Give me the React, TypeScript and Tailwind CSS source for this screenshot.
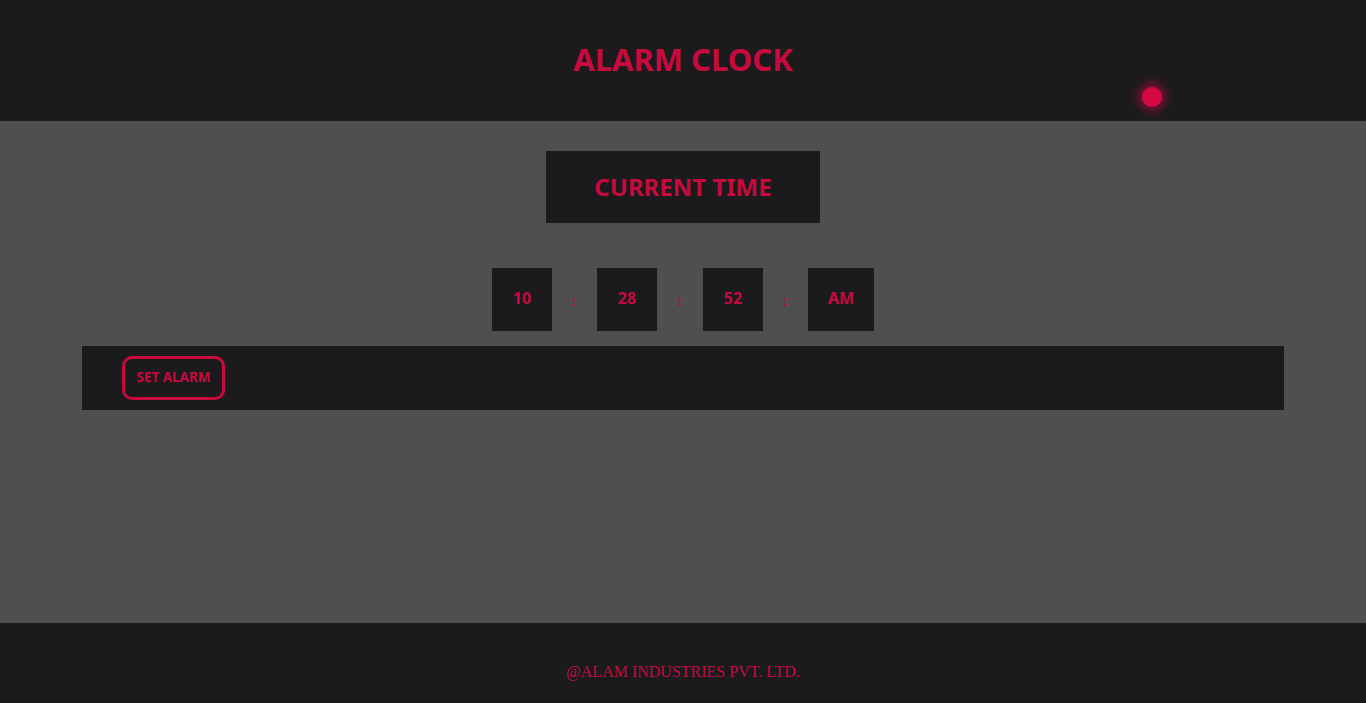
import React from "react";

export default function App() {
  const font = { fontFamily: '"Noto Sans", Lato, sans-serif' };
  return (
    <div className="flex flex-col w-full min-h-[703px] bg-[#4f4f51]" style={font}>
      <header className="relative h-[121px] bg-[#1b1b1d] flex items-center justify-center">
        <h1 className="text-[31px] font-bold text-[#c70a3e] leading-none -mt-[3px]">ALARM CLOCK</h1>
        <span className="absolute left-[1142px] top-[87px] w-[20px] h-[20px] rounded-full bg-[#d50a45] shadow-[0_0_10px_4px_rgba(213,10,69,0.55)]" />
      </header>
      <main className="h-[502px] flex flex-col items-center pt-[30px]">
        <div className="w-[274px] h-[72px] bg-[#1b1b1d] flex items-center justify-center">
          <span className="text-[24px] font-bold text-[#c70a3e] leading-none">CURRENT TIME</span>
        </div>
        <div className="mt-[45px] flex items-center">
          <div className="w-[60px] h-[63px] bg-[#1b1b1d] flex items-center justify-center text-[16px] font-bold text-[#c70a3e] pb-[3px]">10</div>
          <span className="w-[45px] text-center text-[14px] font-bold text-[#c70a3e] mt-[2px]">:</span>
          <div className="w-[60px] h-[63px] bg-[#1b1b1d] flex items-center justify-center text-[16px] font-bold text-[#c70a3e] pb-[3px]">28</div>
          <span className="w-[46px] text-center text-[14px] font-bold text-[#c70a3e] mt-[2px]">:</span>
          <div className="w-[60px] h-[63px] bg-[#1b1b1d] flex items-center justify-center text-[16px] font-bold text-[#c70a3e] pb-[3px]">52</div>
          <span className="w-[45px] text-center text-[14px] font-bold text-[#c70a3e] mt-[2px]">:</span>
          <div className="w-[66px] h-[63px] bg-[#1b1b1d] flex items-center justify-center text-[16px] font-bold text-[#c70a3e] pb-[3px]">AM</div>
        </div>
        <div className="mt-[15px] w-[1202px] h-[64px] bg-[#1b1b1d] flex items-center pl-[40px]">
          <button className="w-[103px] h-[44px] rounded-[10px] border-[3px] border-[#c70a3e] text-[13.5px] font-bold text-[#c70a3e] leading-none">
            SET ALARM
          </button>
        </div>
      </main>
      <footer className="h-[80px] bg-[#1b1b1d] flex items-center justify-center pt-[18px]">
        <span className="text-[16px] text-[#c70a3e]" style={{ fontFamily: '"Liberation Serif", serif' }}>
          @ALAM INDUSTRIES PVT. LTD.
        </span>
      </footer>
    </div>
  );
}
